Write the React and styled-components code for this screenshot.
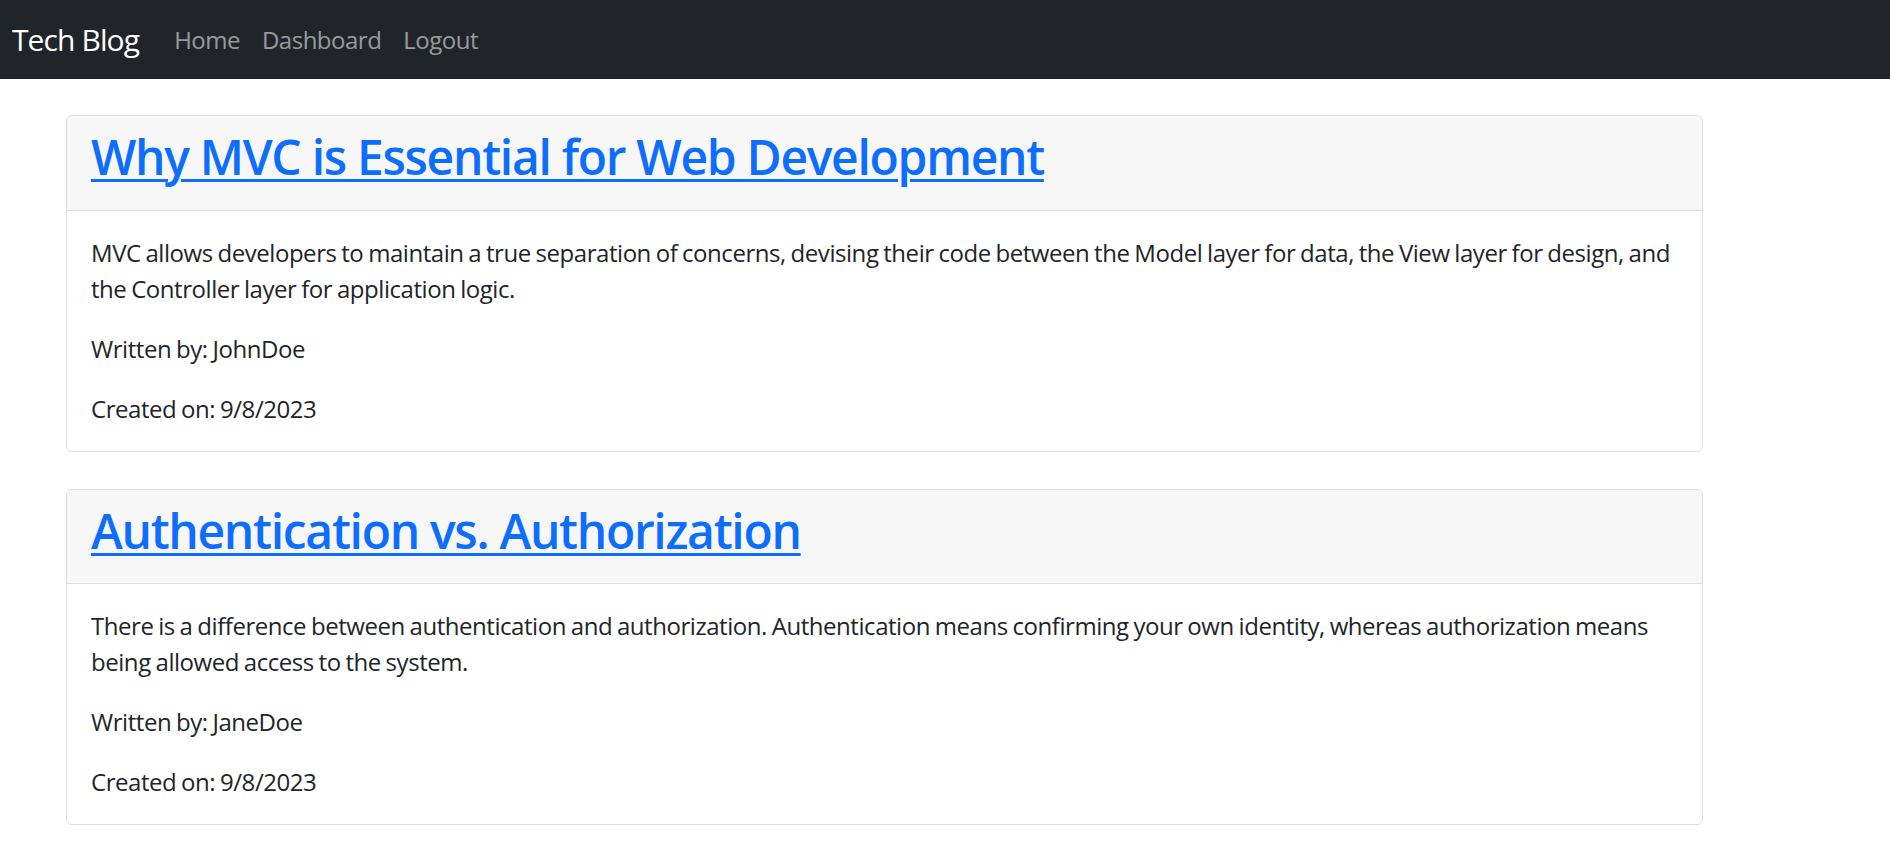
import React from "react";
import styled, { createGlobalStyle } from "styled-components";

const GlobalStyle = createGlobalStyle`
  html, body {
    margin: 0;
    padding: 0;
    background: #fff;
    font-family: "Open Sans", "Noto Sans", sans-serif;
    color: #212529;
  }
`;

const Navbar = styled.nav`
  height: 79px;
  background: #212529;
  display: flex;
  align-items: center;
  padding: 0 12px;
  box-sizing: border-box;
`;
const Brand = styled.a`
  color: #fff;
  font-size: 30px;
  text-decoration: none;
  margin-right: 24px;
  letter-spacing: -0.9px;
`;
const NavLink = styled.a`
  color: rgba(255, 255, 255, 0.55);
  font-size: 24px;
  text-decoration: none;
  padding: 0 11px;
  letter-spacing: -0.5px;
`;
const Main = styled.main`
  padding: 36px 187px 36px 66px;
  display: flex;
  flex-direction: column;
  gap: 37px;
`;
const Card = styled.article`
  border: 1px solid #dfdfdf;
  border-radius: 6px;
  overflow: hidden;
`;
const CardHeader = styled.header`
  background: #f7f7f7;
  border-bottom: 1px solid #dfdfdf;
  padding: 12px 24px;
`;
const Title = styled.h2`
  margin: 0 0 12px;
  font-size: 48px;
  font-weight: 600;
  line-height: 1.2;
  letter-spacing: -1.3px;
  a {
    color: #0d6efd;
    text-decoration: underline;
    text-decoration-thickness: 3px;
    text-underline-offset: 4px;
  }
`;
const CardBody = styled.div`
  padding: 24px 24px 0;
`;
const Text = styled.p`
  margin: 0 0 24px;
  font-size: 24px;
  line-height: 36px;
  letter-spacing: -0.45px;
  word-spacing: -1px;
`;

const posts = [
  {
    title: "Why MVC is Essential for Web Development",
    body:
      "MVC allows developers to maintain a true separation of concerns, devising their code between the Model layer for data, the View layer for design, and the Controller layer for application logic.",
    author: "JohnDoe",
    date: "9/8/2023",
  },
  {
    title: "Authentication vs. Authorization",
    body:
      "There is a difference between authentication and authorization. Authentication means confirming your own identity, whereas authorization means being allowed access to the system.",
    author: "JaneDoe",
    date: "9/8/2023",
  },
];

export default function App() {
  return (
    <>
      <GlobalStyle />
      <Navbar>
        <Brand href="#">Tech Blog</Brand>
        <NavLink href="#">Home</NavLink>
        <NavLink href="#">Dashboard</NavLink>
        <NavLink href="#">Logout</NavLink>
      </Navbar>
      <Main>
        {posts.map((post) => (
          <Card key={post.title}>
            <CardHeader>
              <Title>
                <a href="#">{post.title}</a>
              </Title>
            </CardHeader>
            <CardBody>
              <Text>{post.body}</Text>
              <Text>Written by: {post.author}</Text>
              <Text>Created on: {post.date}</Text>
            </CardBody>
          </Card>
        ))}
      </Main>
    </>
  );
}
